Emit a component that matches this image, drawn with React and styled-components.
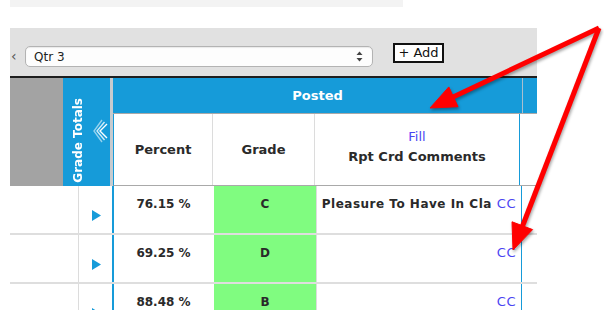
import React from "react";
import { styled, createGlobalStyle } from "styled-components";

const GlobalStyle = createGlobalStyle`
  body {
    margin: 0;
    background: #ffffff;
    font-family: "DejaVu Sans", "Liberation Sans", sans-serif;
  }
`;

const BLUE = "#169bd9";

const rows = [
  { percent: "76.15 %", grade: "C", comment: "Pleasure To Have In Cla" },
  { percent: "69.25 %", grade: "D", comment: "" },
  { percent: "88.48 %", grade: "B", comment: "" },
];

const App = () => {
  return (
    <Page>
      <GlobalStyle />
      <TopStrip />
      <Toolbar>
        <Caret>‹</Caret>
        <Select>
          <SelectText>Qtr 3</SelectText>
          <svg width="7" height="11" viewBox="0 0 7 11">
            <path d="M3.5 0.5 L6.5 4 L0.5 4 Z" fill="#444" />
            <path d="M3.5 10.5 L6.5 7 L0.5 7 Z" fill="#444" />
          </svg>
        </Select>
        <AddButton>+ Add</AddButton>
      </Toolbar>

      <Table>
        <HeaderBand>
          <GrayCol />
          <TotalsCol>
            <TotalsLabel>Grade Totals</TotalsLabel>
            <Chevrons width="15" height="24" viewBox="0 0 15 24">
              <polyline points="9,1 1,12 9,23" stroke="rgba(255,255,255,0.55)" />
              <polyline points="11.5,3 4,12 11.5,21" stroke="rgba(255,255,255,0.8)" />
              <polyline points="14,5 7,12 14,19" stroke="#ffffff" />
            </Chevrons>
          </TotalsCol>
          <Divider />
          <PostedBlock>
            <TitleRow>
              <TitleMain>Posted</TitleMain>
              <TitleRest />
            </TitleRow>
            <SubRow>
              <SubCell $width={99}>Percent</SubCell>
              <SubCell $width={102}>Grade</SubCell>
              <SubCell $width={205} $blueEdge>
                <FillLink>Fill</FillLink>
                <span>Rpt Crd Comments</span>
              </SubCell>
              <SubRest />
            </SubRow>
          </PostedBlock>
        </HeaderBand>

        {rows.map((r, i) => (
          <Row key={i}>
            <BlankCell />
            <ArrowCell>
              <svg width="9" height="11" viewBox="0 0 9 11">
                <path d="M0 0 L9 5.5 L0 11 Z" fill={BLUE} />
              </svg>
            </ArrowCell>
            <BlueBar />
            <PercentCell>{r.percent}</PercentCell>
            <GradeCell>{r.grade}</GradeCell>
            <CommentCell>
              {r.comment && <CommentText>{r.comment}</CommentText>}
              <CcLink>CC</CcLink>
            </CommentCell>
            <RowRest />
          </Row>
        ))}
      </Table>

      <ArrowOverlay width="604" height="310" viewBox="0 0 604 310">
        <g fill="#ff0000" stroke="#ff0000" strokeLinejoin="round">
          <line x1="599" y1="28" x2="451" y2="98" strokeWidth="5" />
          <polygon points="430,108 458,106.7 448.8,86.9" strokeWidth="1" />
          <line x1="599" y1="28" x2="521" y2="230" strokeWidth="5" />
          <polygon points="513,250 532.6,229.6 512,221.8" strokeWidth="1" />
        </g>
      </ArrowOverlay>
    </Page>
  );
};

const Page = styled.div`
  position: relative;
  width: 604px;
  height: 310px;
  overflow: hidden;
  padding-left: 10px;
  box-sizing: border-box;
`;

const TopStrip = styled.div`
  width: 393px;
  height: 7px;
  background: #f3f3f3;
`;

const Toolbar = styled.div`
  margin-top: 21px;
  width: 527px;
  height: 48px;
  background: #e1e1e1;
  display: flex;
  align-items: flex-start;
  padding-top: 15px;
  box-sizing: border-box;
`;

const Caret = styled.span`
  width: 15px;
  margin-top: 3px;
  font-size: 14px;
  line-height: 20px;
  color: #555;
  padding-left: 1px;
  box-sizing: border-box;
`;

const Select = styled.div`
  margin-top: 3px;
  width: 348px;
  height: 21px;
  box-sizing: border-box;
  background: #fdfdfd;
  border: 1px solid #b3b3b3;
  border-radius: 5px;
  box-shadow: inset 0 1px 1px rgba(0, 0, 0, 0.08);
  display: flex;
  align-items: center;
  justify-content: space-between;
  padding: 0 9px 0 8px;
`;

const SelectText = styled.span`
  font-size: 12px;
  color: #222;
`;

const AddButton = styled.div`
  margin-left: 20px;
  width: 51px;
  height: 20px;
  box-sizing: border-box;
  border: 2px solid #111;
  background: #fff;
  font-size: 13px;
  line-height: 16px;
  text-align: center;
  color: #111;
`;

const Table = styled.div`
  width: 527px;
  border-top: 2px solid #1e1e1e;
`;

const HeaderBand = styled.div`
  display: flex;
  height: 108px;
`;

const GrayCol = styled.div`
  width: 53px;
  background: #a3a3a3;
`;

const TotalsCol = styled.div`
  width: 47px;
  background: ${BLUE};
  display: flex;
  align-items: flex-end;
  padding: 0 0 3px 8px;
  box-sizing: border-box;
  gap: 8px;
`;

const TotalsLabel = styled.span`
  writing-mode: vertical-rl;
  transform: rotate(180deg);
  color: #fff;
  font-size: 12px;
  font-weight: bold;
  white-space: nowrap;
`;

const Chevrons = styled.svg`
  align-self: center;
  fill: none;
  stroke-width: 1.4;
`;

const Divider = styled.div`
  width: 3px;
  background: #c7cbcf;
`;

const PostedBlock = styled.div`
  width: 424px;
  display: flex;
  flex-direction: column;
`;

const TitleRow = styled.div`
  display: flex;
  height: 35px;
  background: ${BLUE};
  border-bottom: 1px solid #a9a9a9;
`;

const TitleMain = styled.div`
  width: 409px;
  border-right: 1px solid #a9bfcf;
  display: flex;
  align-items: center;
  justify-content: center;
  color: #fff;
  font-size: 13px;
  font-weight: bold;
`;

const TitleRest = styled.div`
  flex: 1;
`;

const SubRow = styled.div`
  display: flex;
  flex: 1;
  background: #fff;
  border-left: 1px solid ${BLUE};
  border-bottom: 1px solid #a9a9a9;
`;

const SubCell = styled.div`
  width: ${(p) => p.$width}px;
  border-right: 1px solid ${(p) => (p.$blueEdge ? BLUE : "#dcdcdc")};
  display: flex;
  flex-direction: column;
  align-items: center;
  justify-content: center;
  padding-bottom: ${(p) => (p.$blueEdge ? "6px" : "0")};
  box-sizing: border-box;
  font-size: 13px;
  font-weight: bold;
  color: #2a2a2a;
  line-height: 20px;
`;

const FillLink = styled.span`
  color: #4b45f2;
  font-weight: normal;
`;

const SubRest = styled.div`
  flex: 1;
`;

const Row = styled.div`
  display: flex;
  height: 49px;
  box-sizing: border-box;
  border-bottom: 2px solid #dedede;
`;

const BlankCell = styled.div`
  width: 68px;
  border-right: 1px solid #dcdcdc;
`;

const ArrowCell = styled.div`
  width: 33px;
  padding: 20px 0 0 13px;
  box-sizing: border-box;
`;

const BlueBar = styled.div`
  width: 2px;
  background: ${BLUE};
`;

const PercentCell = styled.div`
  width: 100px;
  padding-top: 11px;
  text-align: center;
  font-size: 12px;
  font-weight: bold;
  line-height: 14px;
  color: #2a2a2a;
  border-right: 1px solid #fff;
  box-sizing: border-box;
`;

const GradeCell = styled.div`
  width: 102px;
  background: #80fc80;
  padding-top: 11px;
  text-align: center;
  font-size: 12px;
  font-weight: bold;
  line-height: 14px;
  color: #2a2a2a;
`;

const CommentCell = styled.div`
  width: 206px;
  display: flex;
  justify-content: flex-end;
  align-items: flex-start;
  gap: 5px;
  padding: 11px 5px 0 5px;
  box-sizing: border-box;
  border-left: 1px solid #dcdcdc;
  border-right: 1px solid ${BLUE};
  line-height: 14px;
`;

const CommentText = styled.span`
  white-space: nowrap;
  font-size: 12px;
  font-weight: bold;
  letter-spacing: 0.5px;
  color: #2a2a2a;
`;

const CcLink = styled.span`
  flex: none;
  font-size: 13px;
  letter-spacing: 0.5px;
  color: #4b45f2;
`;

const RowRest = styled.div`
  flex: 1;
`;

const ArrowOverlay = styled.svg`
  position: absolute;
  left: 0;
  top: 0;
  pointer-events: none;
  filter: drop-shadow(1px 2px 1.5px rgba(0, 0, 0, 0.35));
`;

export default App;
